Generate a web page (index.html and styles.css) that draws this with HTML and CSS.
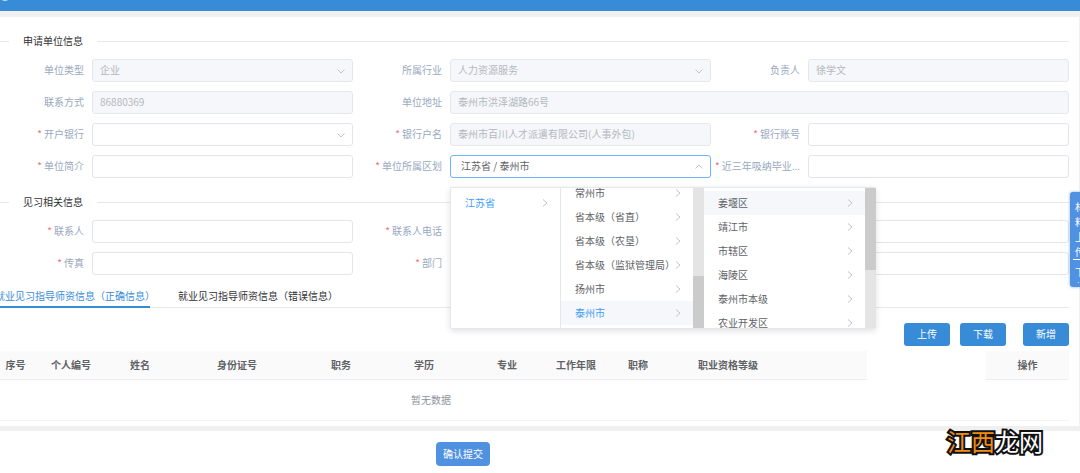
FILE: index.html
```html
<!DOCTYPE html>
<html lang="zh-CN">
<head>
<meta charset="utf-8">
<title>申请单位信息</title>
<link rel="stylesheet" href="styles.css">
</head>
<body>
<header class="topbar"><span class="topbar-logo"></span></header>
<main class="card">
  <form class="form" id="apply">
    <h2 class="divider"><span>申请单位信息</span></h2>
    <div class="grid">
      <div class="field"><label for="type">单位类型</label>
        <div class="control"><select id="type" disabled><option>企业</option></select><svg class="chev" viewBox="0 0 8 8"><path d="M0.5 2.5 4 6 7.5 2.5"/></svg></div></div>
      <div class="field"><label for="industry">所属行业</label>
        <div class="control"><select id="industry" disabled><option>人力资源服务</option></select><svg class="chev" viewBox="0 0 8 8"><path d="M0.5 2.5 4 6 7.5 2.5"/></svg></div></div>
      <div class="field"><label for="leader">负责人</label>
        <div class="control"><input id="leader" type="text" value="徐学文" disabled></div></div>
      <div class="field"><label for="contact">联系方式</label>
        <div class="control"><input id="contact" type="text" value="86880369" disabled></div></div>
      <div class="field wide"><label for="address">单位地址</label>
        <div class="control"><input id="address" type="text" value="泰州市洪泽湖路66号" disabled></div></div>
      <div class="field required"><label for="bank">开户银行</label>
        <div class="control"><select id="bank"><option></option></select><svg class="chev" viewBox="0 0 8 8"><path d="M0.5 2.5 4 6 7.5 2.5"/></svg></div></div>
      <div class="field required"><label for="account-name">银行户名</label>
        <div class="control"><input id="account-name" type="text" value="泰州市百川人才派遣有限公司(人事外包)" disabled></div></div>
      <div class="field required"><label for="account">银行账号</label>
        <div class="control"><input id="account" type="text"></div></div>
      <div class="field required"><label for="intro">单位简介</label>
        <div class="control"><input id="intro" type="text"></div></div>
      <div class="field required"><label for="region">单位所属区划</label>
        <div class="control"><input id="region" class="active" type="text" value="江苏省 / 泰州市" readonly><svg class="chev" viewBox="0 0 8 8"><path d="M0.5 5.5 4 2 7.5 5.5"/></svg>
          <div class="cascader">
            <ul class="menu menu-province">
              <li class="item selected">江苏省<svg viewBox="0 0 8 8"><path d="M2 0.5 6 4 2 7.5"/></svg></li>
            </ul>
            <ul class="menu menu-city">
              <li class="item">常州市<svg viewBox="0 0 8 8"><path d="M2 0.5 6 4 2 7.5"/></svg></li>
              <li class="item">省本级（省直）<svg viewBox="0 0 8 8"><path d="M2 0.5 6 4 2 7.5"/></svg></li>
              <li class="item">省本级（农垦）<svg viewBox="0 0 8 8"><path d="M2 0.5 6 4 2 7.5"/></svg></li>
              <li class="item">省本级（监狱管理局）<svg viewBox="0 0 8 8"><path d="M2 0.5 6 4 2 7.5"/></svg></li>
              <li class="item">扬州市<svg viewBox="0 0 8 8"><path d="M2 0.5 6 4 2 7.5"/></svg></li>
              <li class="item selected hover">泰州市<svg viewBox="0 0 8 8"><path d="M2 0.5 6 4 2 7.5"/></svg></li>
            </ul>
            <div class="scroll scroll-low"><span class="thumb"></span></div>
            <ul class="menu menu-district">
              <li class="item hover">姜堰区<svg viewBox="0 0 8 8"><path d="M2 0.5 6 4 2 7.5"/></svg></li>
              <li class="item">靖江市<svg viewBox="0 0 8 8"><path d="M2 0.5 6 4 2 7.5"/></svg></li>
              <li class="item">市辖区<svg viewBox="0 0 8 8"><path d="M2 0.5 6 4 2 7.5"/></svg></li>
              <li class="item">海陵区<svg viewBox="0 0 8 8"><path d="M2 0.5 6 4 2 7.5"/></svg></li>
              <li class="item">泰州市本级<svg viewBox="0 0 8 8"><path d="M2 0.5 6 4 2 7.5"/></svg></li>
              <li class="item">农业开发区<svg viewBox="0 0 8 8"><path d="M2 0.5 6 4 2 7.5"/></svg></li>
            </ul>
            <div class="scroll scroll-high"><span class="thumb"></span></div>
          </div>
        </div></div>
      <div class="field required"><label for="grads">近三年吸纳毕业...</label>
        <div class="control"><input id="grads" type="text"></div></div>
    </div>
    <h2 class="divider"><span>见习相关信息</span></h2>
    <div class="grid">
      <div class="field required"><label for="person">联系人</label>
        <div class="control"><input id="person" type="text"></div></div>
      <div class="field required wide"><label for="phone">联系人电话</label>
        <div class="control"><input id="phone" type="text"></div></div>
      <div class="field required"><label for="fax">传真</label>
        <div class="control"><input id="fax" type="text"></div></div>
      <div class="field required wide"><label for="dept">部门</label>
        <div class="control"><input id="dept" type="text"></div></div>
    </div>
  </form>
  <div class="tabs">
    <button type="button" class="tab current">就业见习指导师资信息（正确信息）</button>
    <button type="button" class="tab">就业见习指导师资信息（错误信息）</button>
  </div>
  <div class="actions">
    <button type="button" class="btn">上传</button>
    <button type="button" class="btn">下载</button>
    <button type="button" class="btn btn-add">新增</button>
  </div>
  <table class="table">
    <colgroup><col class="w41"><col class="w70"><col class="w68"><col class="w126"><col class="w82"><col class="w84"><col class="w82"><col class="w56"><col class="w68"><col class="w112"><col class="w83"><col><col class="w83"></colgroup>
    <thead><tr><th>序号</th><th>个人编号</th><th>姓名</th><th>身份证号</th><th>职务</th><th>学历</th><th>专业</th><th>工作年限</th><th>职称</th><th>职业资格等级</th><th></th><td></td><th>操作</th></tr></thead>
    <tbody><tr><td colspan="11">暂无数据</td><td></td><td></td></tr></tbody>
  </table>
</main>
<footer class="footer">
  <button type="submit" form="apply" class="submit">确认提交</button>
</footer>
<aside class="side"><span>材料上传</span><span class="side-next">下载</span></aside>
<div class="mark"><span>江西</span>龙网</div>
</body>
</html>
```

FILE: styles.css
```css
* { box-sizing: border-box; }
body {
  margin: 0;
  min-height: 100vh;
  background: #fff;
  color: #606266;
  font: 10px/16px "Noto Sans CJK SC", sans-serif;
  overflow: hidden;
}
button, input, select { font: inherit; color: inherit; margin: 0; }

.topbar { height: 11px; background: #388cd7; overflow: hidden; }
.topbar-logo {
  display: block;
  width: 8px;
  height: 8px;
  margin: -7px 0 0 1px;
  border-radius: 50%;
  background: #c5def3;
}

.card {
  padding: 16px 10px 5px 0;
  border: solid #f0f0f1;
  border-width: 6px 1px 5px 0;
}
.form, .tabs, .table { margin-left: -5px; }

.divider {
  display: flex;
  align-items: center;
  gap: 14px;
  margin: 0;
  color: #303133;
  font: inherit;
}
.divider::before, .divider::after { content: ""; height: 1px; background: #e6e8ec; }
.divider::before { width: 14px; }
.divider::after { flex: 1; }

.grid {
  display: grid;
  grid-template-columns: repeat(3, minmax(0, 1fr));
  row-gap: 9px;
  padding: 10px 0 16px;
}
.field { display: flex; align-items: center; min-width: 0; }
.wide { grid-column: span 2; }
.field label {
  width: 97px;
  padding: 0 8px 2px 0;
  color: #99a9bf;
  text-align: right;
  white-space: nowrap;
}
.required label::before { content: "*"; margin-right: 2px; color: #f56c6c; }
.control { position: relative; flex: 1; min-width: 0; }
.control input, .control select {
  display: block;
  width: 100%;
  height: 23px;
  padding: 0 7px 2px;
  border: 1px solid #e2e5ec;
  border-radius: 3px;
  background: #fff;
  appearance: none;
  outline: none;
}
.control input:disabled, .control select:disabled {
  background: #f5f7fa;
  border-color: #e4e7ed;
  color: #b4b8c0;
  opacity: 1;
}
.control input.active { padding: 0 10px 2px; border-color: #70b4fb; }
svg { fill: none; stroke: #c0c4cc; }
.chev { position: absolute; right: 8px; top: 8px; width: 8px; height: 8px; pointer-events: none; }

.cascader {
  position: absolute;
  z-index: 2;
  top: 32px;
  left: 0;
  display: flex;
  height: 142px;
  background: #fff;
  border: 1px solid #e4e7ed;
  border-right: 0;
  border-radius: 2px;
  box-shadow: 0 2px 6px rgba(0, 0, 0, .12);
}
.menu {
  display: flex;
  flex-direction: column;
  margin: 0;
  padding: 3px 0;
  list-style: none;
  overflow: hidden;
}
.menu-province { width: 110px; border-right: 1px solid #e4e7ed; }
.menu-city { width: 132px; justify-content: flex-end; }
.menu-district { width: 161px; }
.item {
  display: flex;
  flex: none;
  align-items: center;
  justify-content: space-between;
  height: 24px;
  padding: 0 11px 0 14px;
  white-space: nowrap;
}
.item svg { flex: none; width: 8px; height: 8px; }
.menu-city .item svg { margin-left: -8px; }
.selected { color: #409eff; }
.hover { background: #f5f7fa; }
.scroll { display: flex; width: 11px; background: #e4e4e4; }
.thumb { width: 100%; background: #cbcbcb; }
.scroll-low { align-items: flex-end; }
.scroll-low .thumb { height: 52px; }
.scroll-high .thumb { height: 82px; }

.tabs { display: flex; gap: 28px; border-bottom: 1px solid #e4e7ed; }
.tab {
  height: 17px;
  margin-bottom: -1px;
  padding: 0 0 7px;
  border: 0;
  background: none;
  color: #303133;
  line-height: 10px;
  white-space: nowrap;
}
.current {
  width: 155px;
  padding-bottom: 5px;
  border-bottom: 2px solid #388cd7;
  color: #388cd7;
}

.actions { display: flex; justify-content: flex-end; gap: 10px; padding: 15px 0 5px; }
.btn {
  width: 46px;
  height: 23px;
  padding: 0 0 2px;
  border: 0;
  border-radius: 3px;
  background: #388cd7;
  color: #fff;
}
.btn-add { margin-left: 7px; }

.table {
  width: calc(100% + 5px);
  table-layout: fixed;
  border-collapse: collapse;
  border-bottom: 1px solid #f2f3f5;
  text-align: center;
}
.table th, .table td { padding: 0; white-space: nowrap; }
.table th { height: 28px; background: #fafafa; border-bottom: 1px solid #ebeef5; font-weight: 700; }
.table tbody td { height: 41px; color: #909399; }
.w41 { width: 41px; }
.w56 { width: 56px; }
.w68 { width: 68px; }
.w70 { width: 70px; }
.w82 { width: 82px; }
.w83 { width: 83px; }
.w84 { width: 84px; }
.w112 { width: 112px; }
.w126 { width: 126px; }

.footer { display: flex; justify-content: center; padding: 11px 154px 0 0; }
.submit {
  width: 54px;
  height: 24px;
  padding: 0;
  border: 0;
  border-radius: 4px;
  background: #5191e1;
  color: #fff;
}

.side {
  position: absolute;
  top: 192px;
  right: 0;
  width: 10px;
  height: 95px;
  padding: 7px 0 0 3px;
  border-radius: 3px 0 0 3px;
  background: #5191e1;
  box-shadow: 0 0 3px rgba(56, 110, 180, .6);
  color: #fff;
  line-height: 15px;
  overflow: hidden;
}
.side span { display: block; width: 14px; padding-left: 2px; word-break: break-all; }
.side .side-next { height: 24px; padding-top: 4px; border-top: 1px solid #fff; overflow: hidden; }

.mark {
  position: absolute;
  right: 37px;
  bottom: 18px;
  color: #fff;
  font-size: 24px;
  line-height: 28px;
  -webkit-text-stroke: 4px #111;
  paint-order: stroke fill;
}
.mark span { color: #f08c14; }
```
